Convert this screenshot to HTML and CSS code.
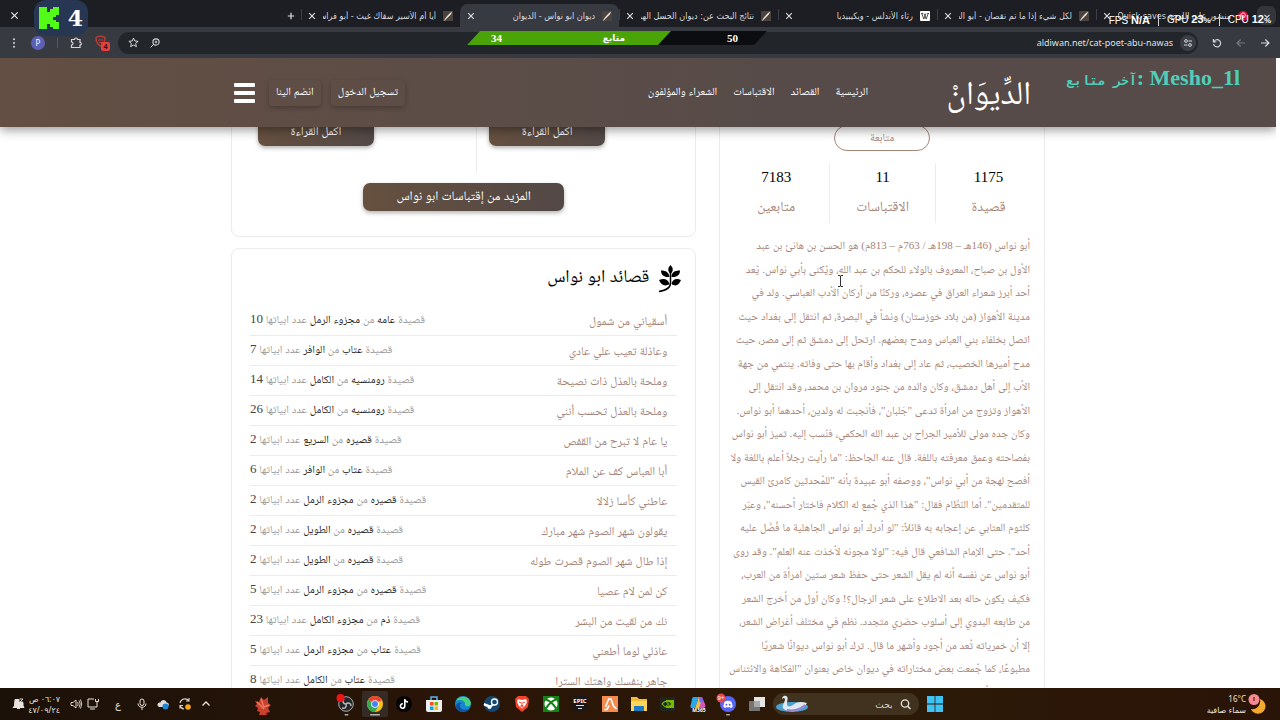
FILE: index.html
```html
<!DOCTYPE html>
<html lang="ar" dir="rtl">

<head>
  <meta charset="UTF-8">
  <meta name="viewport" content="width=device-width, initial-scale=1.0">
  <title>ديوان ابو نواس - الديوان</title>
  <link rel="stylesheet" href="styles.css">
</head>

<body>
  <svg width="0" height="0" class="defs">
    <symbol id="feather" viewBox="0 0 10 10">
      <rect width="10" height="10" fill="#4b433e" />
      <path d="M1 9.500C3 6 5.500 3 9 .5 8.500 4 5 6 1.500 9.700Z" fill="#efe9df" />
    </symbol>
    <symbol id="x" viewBox="0 0 8 8">
      <path d="M1.200 1.200l5.600 5.600M6.800 1.200l-5.600 5.600" stroke="#dfe1e6" stroke-width="1.100" />
    </symbol>
  </svg>

  <div class="browser">
    <div class="tabs">
      <button class="tab-search" aria-label="البحث في علامات التبويب"><svg width="8" height="8" viewBox="0 0 8 8"><path d="M1.500 2.800L4 5.300l2.500-2.500" fill="none" stroke="#dfe1e6" stroke-width="1.200" /></svg></button>
      <div class="tab">
        <svg width="10" height="10" viewBox="0 0 10 10"><circle cx="5" cy="5" r="5" fill="#e60a35" /><path d="M4 8.500L5.200 4M3.300 5.400C2.200 3.500 3.600 2 5.200 2c1.700 0 2.500 1.300 2 2.800C6.800 6.500 5.300 6.800 4.700 5.900" fill="none" stroke="#fff" /></svg>
        <span>منشور على اللوحة Quick saves</span>
        <button class="close" aria-label="إغلاق"><svg width="8" height="8"><use href="#x" /></svg></button>
      </div>
      <div class="tab">
        <svg width="10" height="10"><use href="#feather" /></svg>
        <span>لكل شيء إذا ما تم نقصان - أبو الب</span>
        <button class="close" aria-label="إغلاق"><svg width="8" height="8"><use href="#x" /></svg></button>
      </div>
      <div class="tab">
        <svg width="10" height="10" viewBox="0 0 10 10"><rect width="10" height="10" rx="1" fill="#fff" /><path d="M1 2.500h2M1.800 2.500l2 5.500L6 2.500M4 2.500L6.200 8l2-5.500M7.300 2.500H9" fill="none" stroke="#222" stroke-width=".8" /></svg>
        <span>رثاء الأندلس - ويكيبيديا</span>
        <button class="close" aria-label="إغلاق"><svg width="8" height="8"><use href="#x" /></svg></button>
      </div>
      <div class="tab">
        <svg width="10" height="10"><use href="#feather" /></svg>
        <span>نتائج البحث عن: ديوان الحسل الهم</span>
        <button class="close" aria-label="إغلاق"><svg width="8" height="8"><use href="#x" /></svg></button>
      </div>
      <div class="tab active">
        <svg width="10" height="10"><use href="#feather" /></svg>
        <span>ديوان ابو نواس - الديوان</span>
        <button class="close" aria-label="إغلاق"><svg width="8" height="8"><use href="#x" /></svg></button>
      </div>
      <div class="tab">
        <svg width="10" height="10"><use href="#feather" /></svg>
        <span>أيا أم الأسير سقاك غيث - أبو فراس</span>
        <button class="close" aria-label="إغلاق"><svg width="8" height="8"><use href="#x" /></svg></button>
      </div>
      <button class="new-tab" aria-label="علامة تبويب جديدة"><svg width="8" height="8" viewBox="0 0 8 8"><path d="M4 .8v6.400M.8 4h6.400" stroke="#dfe1e6" stroke-width="1.200" /></svg></button>
      <button class="win-close" aria-label="إغلاق النافذة"><svg width="9" height="9" viewBox="0 0 8 8"><use href="#x" /></svg></button>
    </div>

    <div class="toolbar">
      <button aria-label="للأمام"><svg width="10" height="10" viewBox="0 0 10 10"><path d="M1 5h8M5.300 1.500L9 5 5.300 8.500" fill="none" stroke="#d5d7dc" stroke-width="1.200" /></svg></button>
      <button aria-label="رجوع"><svg width="10" height="10" viewBox="0 0 10 10"><path d="M9 5H1M4.700 1.500L1 5l3.700 3.500" fill="none" stroke="#77797f" stroke-width="1.200" /></svg></button>
      <button aria-label="تحديث"><svg width="10" height="10" viewBox="0 0 10 10"><path d="M1.400 1v3h3M1.800 3.700A3.600 3.600 0 1 1 1.500 6" fill="none" stroke="#d5d7dc" stroke-width="1.200" /></svg></button>
      <div class="omnibox">
        <button class="tune" aria-label="معلومات الموقع"><svg width="10" height="10" viewBox="0 0 10 10"><path d="M5.500 3H9M1 7h3.500" stroke="#d5d7dc" stroke-width="1.100" /><circle cx="3" cy="3" r="1.400" fill="none" stroke="#d5d7dc" /><circle cx="7" cy="7" r="1.400" fill="none" stroke="#d5d7dc" /></svg></button>
        <input type="text" dir="ltr" aria-label="العنوان" value="aldiwan.net/cat-poet-abu-nawas">
        <button aria-label="تكبير"><svg width="10" height="10" viewBox="0 0 10 10"><circle cx="6" cy="4" r="3.100" fill="none" stroke="#d5d7dc" stroke-width="1.100" /><path d="M3.800 6.200L.6 9.400M6 2.700v2.600M4.700 4h2.600" stroke="#d5d7dc" /></svg></button>
        <button aria-label="إشارة مرجعية"><svg width="11" height="11" viewBox="0 0 11 11"><path d="M5.500 1l1.300 3 3.300.3-2.500 2.200.8 3.200-2.900-1.700-2.900 1.700.8-3.200L.9 4.300 4.200 4z" fill="none" stroke="#d5d7dc" /></svg></button>
      </div>
      <div class="actions">
        <button aria-label="مانع الإعلانات"><svg width="16" height="16" viewBox="0 0 16 16"><path d="M2 2.500C4 1 8 1 11 2.500c0 5-2 7-4.500 8.500C3 9 2 7 2 2.500z" fill="none" stroke="#b73b35" stroke-width="1.500" /><path d="M4 5h5M5 7.500h4" stroke="#b73b35" /><rect x="7" y="7" width="9" height="9" rx="2" fill="#e5403a" /><text x="11.500" y="14" font-size="7" font-weight="700" text-anchor="middle" fill="#3b1110">4</text></svg></button>
        <button aria-label="الإضافات"><svg width="12" height="12" viewBox="0 0 12 12"><path d="M1.500 2.500h3c0-2 3-2 3 0h2.500v3c1.800 0 1.800 2.500 0 2.500v2.500H1.500V8c2 0 2-3 0-3z" fill="none" stroke="#d5d7dc" stroke-width="1.200" /></svg></button>
        <i class="sep"></i>
        <button class="avatar" aria-label="الملف الشخصي">P</button>
        <button aria-label="القائمة"><svg width="10" height="10" viewBox="0 0 10 10"><g fill="#d5d7dc"><circle cx="5" cy="1.200" r="1" /><circle cx="5" cy="5" r="1" /><circle cx="5" cy="8.800" r="1" /></g></svg></button>
      </div>
    </div>
  </div>

  <div class="viewport">
    <header>
      <div class="container bar">
        <a href="#" class="logo">الدِّيوَانْ</a>
        <nav>
          <a href="#">الرئيسية</a>
          <a href="#">القصائد</a>
          <a href="#">الاقتباسات</a>
          <a href="#">الشعراء والمؤلفون</a>
        </nav>
        <div class="account">
          <button class="login">تسجيل الدخول</button>
          <button class="join">انضم الينا</button>
          <button class="burger" aria-label="القائمة"><i></i><i></i><i></i></button>
        </div>
      </div>
    </header>

    <main class="container page">
      <aside class="card poet">
        <button class="follow">متابعة</button>
        <div class="stats">
          <div><b>1175</b><span>قصيدة</span></div>
          <div><b>11</b><span>الاقتباسات</span></div>
          <div><b>7183</b><span>متابعين</span></div>
        </div>
        <div class="bio">
          <span>أبو نواس (146هـ – 198هـ / 763م – 813م) هو الحسن بن هانئ بن عبد</span>
          <span>الأول بن صباح، المعروف بالولاء للحكم بن عبد الله، ويُكنى بأبي نواس. يُعد</span>
          <span>أحد أبرز شعراء العراق في عصره، وركنًا من أركان الأدب العباسي. ولد في</span>
          <span>مدينة الأهواز (من بلاد خوزستان) ونشأ في البصرة، ثم انتقل إلى بغداد حيث</span>
          <span>اتصل بخلفاء بني العباس ومدح بعضهم. ارتحل إلى دمشق ثم إلى مصر، حيث</span>
          <span>مدح أميرها الخصيب، ثم عاد إلى بغداد وأقام بها حتى وفاته. ينتمي من جهة</span>
          <span>الأب إلى أهل دمشق، وكان والده من جنود مروان بن محمد، وقد انتقل إلى</span>
          <span>الأهواز وتزوج من امرأة تدعى "جَلبان"، فأنجبت له ولدين، أحدهما أبو نواس.</span>
          <span>وكان جده مولى للأمير الجراح بن عبد الله الحكمي، فنُسب إليه. تميز أبو نواس</span>
          <span>بفصاحته وعمق معرفته باللغة. قال عنه الجاحظ: "ما رأيت رجلاً أعلم باللغة ولا</span>
          <span>أفصح لهجة من أبي نواس"، ووصفه أبو عبيدة بأنه "للمُحدثين كامرئ القيس</span>
          <span>للمتقدمين". أما النّظّام فقال: "هذا الذي جُمِع له الكلام فاختار أحسنه"، وعبّر</span>
          <span>كلثوم العتابي عن إعجابه به قائلاً: "لو أدرك أبو نواس الجاهلية ما فُضّل عليه</span>
          <span>أحد". حتى الإمام الشافعي قال فيه: "لولا مجونه لأخذت عنه العلم". وقد روى</span>
          <span>أبو نواس عن نفسه أنه لم يقل الشعر حتى حفظ شعر ستين امرأة من العرب،</span>
          <span>فكيف يكون حاله بعد الاطلاع على شعر الرجال؟! وكان أول من أخرج الشعر</span>
          <span>من طابعه البدوي إلى أسلوب حضري متجدد. نظم في مختلف أغراض الشعر،</span>
          <span>إلا أن خمرياته تُعد من أجود وأشهر ما قال. ترك أبو نواس ديوانًا شعريًا</span>
          <span>مطبوعًا، كما جُمعت بعض مختاراته في ديوان خاص بعنوان "الفكاهة والائتناس</span>
          <span>في مجون أبي نواس".</span>
        </div>
      </aside>

      <div class="content">
        <section class="card quotes">
          <div class="pair">
            <div><button>أكمل القراءة</button></div>
            <div><button>أكمل القراءة</button></div>
          </div>
          <button class="more">المزيد من إقتباسات ابو نواس</button>
        </section>

        <section class="card poems">
          <h2>
            <svg width="22" height="27" viewBox="0 0 22 27"><path d="M11.500 0c3 3 3 6 0 9-3-3-3-6 0-9zM10.500 12C5 12.500 2 10 2 5.500c5 0 8 2 8.500 6.500zM12.500 12c0-4.500 3-6.500 8.500-6.500 0 4.500-3 7-8.500 6.500zM10.500 19C6 22 2 20 0 15c5-2 9-1 10.500 4zM12.500 19c1-5 5-6 9.500-4-2 5-5 7-9.500 4z" /><path d="M11.500 8v10c0 5-4 7-11.500 8.500" fill="none" stroke="#000" stroke-width="1.500" /></svg>
            قصائد ابو نواس
          </h2>
          <ul>
            <li><a href="#">أسقياني من شمول</a><p>قصيدة <b>عامه</b> من <b>مجزوء الرمل</b> عدد ابياتها <em>10</em></p></li>
            <li><a href="#">وعاذلة تعيب علي عادي</a><p>قصيدة <b>عتاب</b> من <b>الوافر</b> عدد ابياتها <em>7</em></p></li>
            <li><a href="#">وملحة بالعذل ذات نصيحة</a><p>قصيدة <b>رومنسيه</b> من <b>الكامل</b> عدد ابياتها <em>14</em></p></li>
            <li><a href="#">وملحة بالعذل تحسب أنني</a><p>قصيدة <b>رومنسيه</b> من <b>الكامل</b> عدد ابياتها <em>26</em></p></li>
            <li><a href="#">يا عام لا تبرح من القفص</a><p>قصيدة <b>قصيره</b> من <b>السريع</b> عدد ابياتها <em>2</em></p></li>
            <li><a href="#">أبا العباس كف عن الملام</a><p>قصيدة <b>عتاب</b> من <b>الوافر</b> عدد ابياتها <em>6</em></p></li>
            <li><a href="#">عاطني كأسا زلالا</a><p>قصيدة <b>قصيره</b> من <b>مجزوء الرمل</b> عدد ابياتها <em>2</em></p></li>
            <li><a href="#">يقولون شهر الصوم شهر مبارك</a><p>قصيدة <b>قصيره</b> من <b>الطويل</b> عدد ابياتها <em>2</em></p></li>
            <li><a href="#">إذا طال شهر الصوم قصرت طوله</a><p>قصيدة <b>قصيره</b> من <b>الطويل</b> عدد ابياتها <em>2</em></p></li>
            <li><a href="#">كن لمن لام عصيا</a><p>قصيدة <b>قصيره</b> من <b>مجزوء الرمل</b> عدد ابياتها <em>5</em></p></li>
            <li><a href="#">نك من لقيت من البشر</a><p>قصيدة <b>ذم</b> من <b>مجزوء الكامل</b> عدد ابياتها <em>23</em></p></li>
            <li><a href="#">عاذلي لوما أطعني</a><p>قصيدة <b>عتاب</b> من <b>مجزوء الرمل</b> عدد ابياتها <em>5</em></p></li>
            <li><a href="#">جاهر بنفسك واهتك السترا</a><p>قصيدة <b>عتاب</b> من <b>الكامل</b> عدد ابياتها <em>8</em></p></li>
          </ul>
        </section>
      </div>
    </main>
  </div>

  <footer class="taskbar">
    <div class="weather">
      <svg width="20" height="20" viewBox="0 0 20 20"><path d="M13 5a7.500 7.500 0 1 1-9 10C10 16 14 11 13 5z" fill="#f3a92c" transform="translate(-2 0)" /><circle cx="5" cy="5.500" r="5.500" fill="#f58a92" /><path d="M5 3v4" stroke="#5d1a20" stroke-width="1.200" /></svg>
      <div><span dir="ltr">16°C</span><span>سماء صافية</span></div>
    </div>
    <div class="apps">
      <svg width="16" height="16" viewBox="0 0 16 16"><path d="M0 0h7.600v7.600H0zM8.400 0H16v7.600H8.400zM0 8.400h7.600V16H0zM8.400 8.400H16V16H8.400z" fill="#3fc3f5" /></svg>
      <label class="search">
        <svg width="11" height="11" viewBox="0 0 11 11"><circle cx="5" cy="4.500" r="3.700" fill="none" stroke="#e8e3de" stroke-width="1.300" /><path d="M7.700 7.200L10.500 10" stroke="#e8e3de" stroke-width="1.500" /></svg>
        <input type="text" placeholder="بحث" aria-label="بحث">
        <svg width="34" height="18" viewBox="0 0 34 18"><ellipse cx="17" cy="12" rx="16" ry="5" fill="#4b9fd0" /><path d="M8 13c4 5 18 5 24-5-6-2-11-1-14 2-3 2-6 2-6-1 0-4 2-7-1-8-2-1-4 1-4 3 2-2 3-1 3 1-1 4-3 5-2 8z" fill="#dfe9f2" /><path d="M12 15c6 1 13 0 18-5" fill="none" stroke="#9d83cf" stroke-width="2" /></svg>
      </label>
      <div class="icons">
        <svg viewBox="0 0 16 16"><rect y="5" width="11" height="10" fill="#747474" /><rect x="5" y="1" width="11" height="10" fill="#e5e5e5" /><path d="M5 5h6v6H5z" fill="#aaa" /></svg>
        <svg viewBox="0 0 16 16"><circle cx="9" cy="8" r="8" fill="#5865f2" /><path d="M4.500 11c0-3 .8-5 1.500-5.500 1.500-1 4.500-1 6 0 .7.5 1.500 2.500 1.500 5.500-1 1-2 1-2.500.2H7C6.500 12 5.500 12 4.500 11z" fill="#fff" /><circle cx="7.400" cy="8.700" r="1" fill="#5865f2" /><circle cx="10.700" cy="8.700" r="1" fill="#5865f2" /><circle cx="2" cy="2" r="4.500" fill="#e5484d" /><text direction="ltr" x="2" y="4" font-size="6" text-anchor="middle" fill="#fff">9+</text><rect x="7" y="18" width="4" height="1.500" rx=".7" fill="#aaa" /></svg>
        <svg viewBox="0 0 16 16"><path d="M4 1h5l-4 11H2c-2 0-2-2-1-4l1-5c.4-1.500 1-2 2-2z" fill="#2aa7e8" /><path d="M8 1h4l3 7c1 3 0 4-2 4H9z" fill="#d456b8" /><path d="M9 1L5 12h4l3-8z" fill="#e9c348" /><path d="M9 1h3l1 4-3 2z" fill="#6d6bf0" /><text x="9" y="16" font-size="5" font-weight="700" text-anchor="middle" fill="#fff">M365</text></svg>
        <svg viewBox="0 0 16 16"><rect y="1" width="15" height="14" rx="1" fill="#20251f" /><path d="M6 4h8v8H6z" fill="#76b900" /><path d="M2 8c3-4 8-4 10 0-2 4-7 4-10 0z" fill="none" stroke="#76b900" stroke-width="1.200" /><path d="M5 8c2-2.500 5-2 6 0-1.500 2-4 2.500-6 0z" fill="#20251f" /><circle cx="8" cy="8" r="1" fill="#76b900" /></svg>
        <svg viewBox="0 0 16 16"><path d="M0 1h6l2 2h8v11H0z" fill="#f0ba35" /><path d="M0 5h16v10H0z" fill="#ffd55a" /><path d="M3 10h10v5H3z" fill="#1f7ac4" /></svg>
        <svg viewBox="0 0 16 16"><rect width="16" height="16" fill="#f58b4c" /><path d="M2 13.500h3l2-4M6 3h3l2.500 7 3 3M6.500 3.500L3.500 11" fill="none" stroke="#fff" stroke-width="1.600" /></svg>
        <svg viewBox="0 0 16 16"><path d="M1.500 0h13v13L8 16l-6.500-3z" fill="#17191c" /><text x="8" y="7" font-size="6" font-weight="700" text-anchor="middle" fill="#fff">EPIC</text><path d="M4 9.500h8M6 12.500h4" stroke="#ddd" /></svg>
        <svg viewBox="0 0 16 16"><rect width="16" height="16" fill="#148216" /><circle cx="8" cy="8" r="6.500" fill="#fff" /><path d="M3 3.500C7 5 11 9 13 12.500M13 3.500C9 5 5 9 3 12.500" fill="none" stroke="#148216" stroke-width="2" /></svg>
        <svg viewBox="0 0 16 16"><path d="M4 0h8l3 3-1 8-6 5-6-5-1-8z" fill="#f4452c" /><path d="M4 3l4 1 4-1 1 3-2 4-3 2.500L5 10 3 6z" fill="#fff" /><path d="M5 6l2 1M11 6L9 7M8 6v3l-1.500 1.200L8 11l1.500-.8L8 9" fill="none" stroke="#f4452c" /></svg>
        <svg viewBox="0 0 16 16"><circle cx="8" cy="8" r="8" fill="#154670" /><circle cx="10.500" cy="6" r="3" fill="none" stroke="#fff" stroke-width="1.300" /><path d="M0 8.500l6 2.500 3-2.500M0 8l5 2" stroke="#fff" stroke-width="2" fill="none" /><circle cx="5.500" cy="11" r="2" fill="#fff" /></svg>
        <svg viewBox="0 0 16 16"><circle cx="8" cy="8" r="8" fill="#1686d3" /><path d="M1 5c3-6 13-6 15 2 0 4-5 4-6 2 1-5-6-6-9-4z" fill="#4bd17c" /><path d="M5 8c-1 5 4 7 9 5-4 5-12 3-13-3 0-3 3-4 6-3z" fill="#104f9e" /></svg>
        <svg viewBox="0 0 16 16"><path d="M5 4V1h6v3" fill="none" stroke="#56b6ee" stroke-width="1.500" /><path d="M0 4h16v10q0 2-2 2H2q-2 0-2-2z" fill="#eceff2" /><path d="M4 6h3.500v3.500H4z" fill="#f25022" /><path d="M8.500 6H12v3.500H8.500z" fill="#7fba00" /><path d="M4 10.500h3.500V14H4z" fill="#00a4ef" /><path d="M8.500 10.500H12V14H8.500z" fill="#ffb900" /></svg>
        <svg viewBox="0 0 16 16"><circle cx="8" cy="8" r="8" fill="#050505" /><path d="M8.800 3v7a2.200 2.200 0 1 1-2-2.200M8.800 3c.3 2 1.600 3 3.200 3" fill="none" stroke="#fff" stroke-width="1.600" /></svg>
        <svg viewBox="0 0 16 16"><rect x="-5" y="-5" width="26" height="26" rx="2" fill="#342b25" /><circle cx="8" cy="8" r="8" fill="#fbc116" /><path d="M8 8L1.100 4A8 8 0 0 1 14.900 4z" fill="#ea4335" /><path d="M8 8L1.100 4A8 8 0 0 0 8 16l3.500-6z" fill="#34a853" /><circle cx="8" cy="8" r="3.800" fill="#fff" /><circle cx="8" cy="8" r="3" fill="#4285f4" /><rect x="3" y="18" width="10" height="1.500" rx=".7" fill="#b9b2ac" /></svg>
        <svg viewBox="0 0 16 16"><circle cx="8" cy="8" r="7.300" fill="#25262a" stroke="#a9abae" /><path d="M8 8C5 8 4 5 6 3M8 8c2-2 5-1 5 2M8 8c1 3-1 5-4 4" fill="none" stroke="#bbb" stroke-width="1.500" /><circle cx="2.500" cy="2" r="4" fill="#f01414" /><rect x="6.500" y="18" width="4" height="1.500" rx=".7" fill="#aaa" /></svg>
      </div>
    </div>
    <div class="tray">
      <svg class="maple" width="18" height="22" viewBox="0 0 18 22"><path d="M1 8l4 1 2-5 3 3 4-3v6l3 2-3 3 2 4-4 1 1 2H5l1-3-3-1 1-3-3-2 2-2z" fill="#c9402e" /><path d="M7 6l3 8M15 12l-5 2M3 9l7 7" stroke="#ee7c62" stroke-width="1.500" /></svg>
      <svg width="10" height="10" viewBox="0 0 10 10"><path d="M1.500 6.500L5 3l3.500 3.500" fill="none" stroke="#e8e3de" stroke-width="1.300" /></svg>
      <svg width="12" height="12" viewBox="0 0 12 12"><path d="M1 5a5 5 0 0 1 9-2M10 0v3H7M1 7.500A5 5 0 0 0 5 11M1 10.500V7.500h3" fill="none" stroke="#d9d3cd" stroke-width="1.100" /><circle cx="9" cy="9" r="2.800" fill="#f7a51c" /></svg>
      <svg width="12" height="12" viewBox="0 0 12 12"><path d="M2 9C-1 7 1 4 3.500 4.500 4 1 9 1 9.500 4.500c3 0 3 4 0 4.500z" fill="#ddd" /><circle cx="8.500" cy="8.500" r="3" fill="#1c86d8" /></svg>
      <svg width="10" height="12" viewBox="0 0 10 12"><rect x="3" y="1" width="4" height="6.500" rx="2" fill="none" stroke="#e8e3de" /><path d="M1 5.500c0 5 8 5 8 0M5 9.500V12" fill="none" stroke="#e8e3de" /></svg>
      <span class="lang">ع</span>
      <div class="net">
        <svg width="12" height="12" viewBox="0 0 12 12"><path d="M7 1H1v8h9V6M3 11h5M8.500 1v2.500h3V1M10 3.500V6" fill="none" stroke="#e8e3de" /></svg>
        <svg width="12" height="12" viewBox="0 0 12 12"><path d="M1 4.500h2L6 2v8L3 7.500H1zM7.500 4q1.500 2 0 4M9 2.500q2.500 3.500 0 7M10.500 1.500q2.500 4.500 0 9" fill="none" stroke="#e8e3de" stroke-width=".9" /></svg>
      </div>
      <div class="clock"><span>٠٦:٠٧ ص</span><span>٤٧/٠٩/٢٤</span></div>
      <svg width="11" height="12" viewBox="0 0 11 12"><path d="M2 1.500h4v3h4V8l1 1.500H0L1.500 8zM4 10.500h3" fill="#e8e3de" stroke="#e8e3de" /><path d="M6.500 1H10L7 4h3" fill="none" stroke="#e8e3de" stroke-width=".9" /></svg>
    </div>
  </footer>

  <div class="kick" dir="ltr">
    <svg width="20" height="22" viewBox="0 0 20 22"><path d="M0 0h8v5h3V2h3V0h6v8h-3v2h-3v3h3v2h3v7h-6v-2h-3v-3H8v5H0z" fill="#53fc18" /></svg>
    <span>4</span>
  </div>
  <div class="goal" dir="ltr">
    <div class="fill"><span>34</span><span>متابع</span></div>
    <span>50</span>
  </div>
  <div class="perf" dir="ltr"><span>FPS <b>N/A</b></span><i></i><span>GPU <b>23<small>%</small></b></span><i></i><span>CPU <b>12<small>%</small></b></span></div>
  <div class="latest" dir="ltr"><span>آخر متابع</span>: Mesho_1l</div>
  <svg class="cursor" width="7" height="12" viewBox="0 0 7 12"><path d="M1 .5h2l.5.5.5-.5h2M1 11.500h2l.5-.5.5.5h2M3.500 1v10" fill="none" stroke="#333" /></svg>
</body>

</html>
```

FILE: styles.css
```css
:root {
  --tabs: #1c1e23;
  --toolbar: #383a42;
  --omnibox: #22252a;
  --brown: #a58478;
  --line: #ececec;
}

* {
  box-sizing: border-box;
}

body {
  margin: 0;
  height: 100vh;
  display: flex;
  flex-direction: column;
  overflow: hidden;
  position: relative;
  background: #fff;
  font-family: "Liberation Serif", "Noto Naskh Arabic", serif;
}

.defs {
  position: absolute;
}

svg {
  display: block;
  flex: none;
  overflow: visible;
}

button {
  border: none;
  padding: 0;
  background: none;
  font-family: inherit;
  color: inherit;
  white-space: nowrap;
}

a {
  color: inherit;
  text-decoration: none;
}

/* browser */
.browser {
  font-family: "Noto Sans", "DejaVu Sans", sans-serif;
  color: #d5d7dc;
}

.tabs {
  display: flex;
  align-items: center;
  height: 27px;
  padding: 4px 4px 0 10px;
  background: var(--tabs);
}

.tab-search {
  width: 19px;
  height: 19px;
  margin-left: 2px;
  border-radius: 6px;
  background: #33353b;
  display: grid;
  place-items: center;
}

.tab {
  flex: 0 1 159px;
  min-width: 0;
  height: 23px;
  padding: 0 7px;
  display: flex;
  align-items: center;
  gap: 7px;
  font-family: "DejaVu Sans Condensed", "DejaVu Sans", sans-serif;
  font-size: 9px;
  position: relative;
}

.tab span {
  flex: 1;
  overflow: hidden;
  white-space: nowrap;
}

.tab.active {
  background: var(--toolbar);
  border-radius: 8px 8px 0 0;
}

.tab:not(.active)::after {
  content: "";
  position: absolute;
  left: 0;
  top: 5px;
  height: 11px;
  width: 1px;
  background: #3c3e44;
}

.new-tab {
  margin-right: 6px;
}

.win-close {
  margin-right: auto;
}

.toolbar {
  display: flex;
  align-items: center;
  gap: 14px;
  height: 31px;
  padding: 0 10px 0 9px;
  background: var(--toolbar);
}

.omnibox {
  flex: 1;
  height: 22px;
  border-radius: 11px;
  background: var(--omnibox);
  display: flex;
  align-items: center;
  gap: 11px;
  padding: 0 2px 0 10px;
}

.tune {
  width: 16px;
  height: 16px;
  border-radius: 8px;
  background: #3b3e44;
  display: grid;
  place-items: center;
}

.omnibox input {
  flex: 1;
  min-width: 0;
  margin-right: -4px;
  border: none;
  padding: 0;
  background: none;
  color: #dfe1e6;
  font: 9px "Noto Sans", sans-serif;
  text-align: right;
}

.actions {
  display: flex;
  align-items: center;
  gap: 12px;
  margin-right: -6px;
}

.sep {
  width: 1px;
  height: 10px;
  background: #55575e;
}

.avatar {
  width: 14px;
  height: 14px;
  border-radius: 7px;
  background: #5d60b4;
  color: #fff;
  font-size: 8px;
}

/* site */
.viewport {
  flex: 1;
  min-height: 0;
  overflow: hidden;
  margin-right: 4px;
}

.container {
  max-width: 814px;
  margin: 0 auto;
}

header {
  position: relative;
  z-index: 1;
  background: linear-gradient(90deg, #634f43, #574b49 60%);
  box-shadow: 0 3px 10px rgba(0, 0, 0, .4);
  color: #fff;
}

.bar {
  height: 69px;
  padding: 0 14px 0 3px;
  display: flex;
  align-items: center;
}

.logo {
  width: 82px;
  font-size: 33px;
  line-height: 60px;
}

nav {
  display: flex;
  gap: 16px;
  margin-right: 81px;
  font-size: 11px;
}

.account {
  display: flex;
  align-items: center;
  margin-right: auto;
}

.account .login,
.account .join {
  height: 26px;
  padding: 0 7px;
  border-radius: 4px;
  font-size: 11px;
  box-shadow: 0 2px 5px rgba(0, 0, 0, .25);
}

.account .join {
  margin: 0 10px 0 14px;
}

.burger {
  width: 21px;
  display: grid;
  gap: 4px;
}

.burger i {
  height: 4px;
  border-radius: 1px;
  background: #fff;
}

/* scrolled a little under the header */
.page {
  display: grid;
  grid-template-columns: minmax(0, 7fr) minmax(0, 10fr);
  gap: 23px;
  margin-top: -19px;
}

.card {
  border: 1px solid var(--line);
  border-radius: 8px;
  background: #fff;
}

.poet {
  padding: 16px 14px 6px;
}

.content {
  display: flex;
  flex-direction: column;
  gap: 11px;
}

.follow {
  display: block;
  width: 96px;
  height: 26px;
  margin: 0 auto 12px;
  border: 1px solid var(--brown);
  border-radius: 13px;
  color: var(--brown);
  font-size: 11px;
}

.stats {
  display: grid;
  grid-template-columns: 1fr 1fr 1fr;
  margin: 0 -14px;
  padding: 0 3px;
  text-align: center;
}

.stats div {
  height: 60px;
  border-left: 1px solid var(--line);
}

.stats div:last-child {
  border: none;
}

.stats b,
.stats span {
  display: block;
  line-height: 29px;
  font-weight: 400;
  font-size: 15px;
}

.stats span {
  color: var(--brown);
  font-size: 14px;
}

/* the lines share the height of the block */
.bio {
  height: 470px;
  margin-top: 11px;
  display: flex;
  flex-direction: column;
  justify-content: space-between;
  color: var(--brown);
  font-size: 11px;
  line-height: 23px;
  white-space: nowrap;
}

.quotes {
  padding: 9px 0 25px;
  text-align: center;
}

.pair {
  display: grid;
  grid-template-columns: 20fr 21fr;
  padding-left: 14px;
  text-align: left;
}

.pair div {
  height: 55px;
  padding-left: 12px;
}

.pair div:first-child {
  border-left: 1px solid var(--line);
}

.pair button,
.more {
  border-radius: 7px;
  background: linear-gradient(90deg, #66503f, #524846);
  box-shadow: 0 2px 4px rgba(0, 0, 0, .3);
  color: #fff;
}

.pair button {
  width: 116px;
  height: 28px;
  font-size: 12px;
}

.more {
  width: 201px;
  height: 28px;
  margin-top: 10px;
  font-size: 13px;
}

.poems {
  padding: 14px 14px 0 18px;
}

h2 {
  display: flex;
  align-items: center;
  gap: 10px;
  height: 30px;
  margin: 0;
  font-size: 18px;
  font-weight: 400;
}

ul {
  list-style: none;
  margin: 13px 4px 0 0;
  padding: 0;
}

li {
  display: flex;
  justify-content: space-between;
  align-items: center;
  height: 30px;
  padding-right: 10px;
  border-bottom: 1px solid var(--line);
  white-space: nowrap;
  font-size: 12px;
  line-height: 24px;
  color: var(--brown);
}

li p {
  margin: 0 0 4px;
  font-size: 11px;
  color: #999;
}

li b {
  font-weight: 400;
  color: #222;
}

li em {
  font-style: normal;
  font-size: 13px;
  color: #444;
}

/* taskbar */
.taskbar {
  height: 32px;
  flex: none;
  position: relative;
  z-index: 2;
  display: grid;
  grid-template-columns: 1fr auto 1fr;
  align-items: center;
  background: linear-gradient(90deg, #1b1109, #2a1507 35%, #2c1a08 70%, #2a1307);
  color: #e8e3de;
  font-family: "Noto Sans", "DejaVu Sans", sans-serif;
  font-size: 8px;
}

.weather {
  display: flex;
  align-items: center;
  gap: 3px;
  padding-right: 11px;
}

.weather span,
.clock span {
  display: block;
  line-height: 11px;
}

.weather span:first-child {
  text-align: right;
}

.apps {
  display: flex;
  align-items: center;
  gap: 8px;
}

.search {
  width: 146px;
  height: 22px;
  border-radius: 11px;
  background: #41321f;
  display: flex;
  align-items: center;
  gap: 7px;
  padding: 0 8px 0 2px;
}

.search input {
  flex: 1;
  min-width: 0;
  border: none;
  padding: 0;
  background: none;
  color: inherit;
  font: 9px "Noto Sans", "DejaVu Sans", sans-serif;
}

.search input::placeholder {
  color: #d9d3cd;
}

.icons {
  width: 427px;
  display: flex;
  justify-content: space-between;
}

.icons svg {
  width: 16px;
  height: 16px;
}

.tray {
  display: flex;
  align-items: center;
  justify-content: flex-end;
  gap: 10px;
  padding-left: 13px;
}

.maple {
  margin-left: 33px;
}

.lang {
  width: 18px;
  text-align: center;
  font-size: 10px;
}

.net {
  display: flex;
  gap: 5px;
}

.clock {
  width: 34px;
  margin-left: -8px;
}

/* stream overlays */
.kick {
  position: absolute;
  left: 34px;
  top: 0;
  width: 54px;
  height: 36px;
  border-radius: 12px;
  background: #263653;
  display: flex;
  align-items: center;
  justify-content: center;
  gap: 9px;
  color: #fff;
  font: bold 22px "DejaVu Serif", serif;
}

.goal {
  position: absolute;
  left: 467px;
  top: 31px;
  width: 300px;
  height: 14px;
  display: flex;
  align-items: center;
  background: #0b0d10;
  clip-path: polygon(13px 0, 100% 0, 287px 100%, 0 100%);
  color: #fff;
  font: bold 11px "Liberation Serif", "DejaVu Sans", serif;
}

.fill {
  width: 204px;
  height: 14px;
  padding: 0 46px 0 24px;
  margin-right: 56px;
  background: #4aa408;
  clip-path: polygon(0 0, 100% 0, 191px 100%, 0 100%);
  display: flex;
  align-items: center;
  justify-content: space-between;
}

.fill span:last-child {
  font-size: 9px;
}

.perf {
  position: absolute;
  right: 9px;
  top: 12px;
  display: flex;
  align-items: center;
  gap: 8px;
  color: #fff;
  font: 10px/14px "Liberation Sans", sans-serif;
}

.perf b {
  font-size: 11px;
}

.perf i {
  width: 1px;
  height: 12px;
  background: #d5d7dc;
}

.perf small {
  font-size: 8px;
}

.latest {
  position: absolute;
  right: 40px;
  top: 66px;
  z-index: 1;
  color: #4fcfba;
  font: bold 22px/24px "Liberation Serif", "DejaVu Sans", serif;
}

.latest span {
  font-family: "DejaVu Sans Mono", monospace;
  font-size: 13px;
}

.cursor {
  position: absolute;
  left: 837px;
  top: 275px;
}
```
